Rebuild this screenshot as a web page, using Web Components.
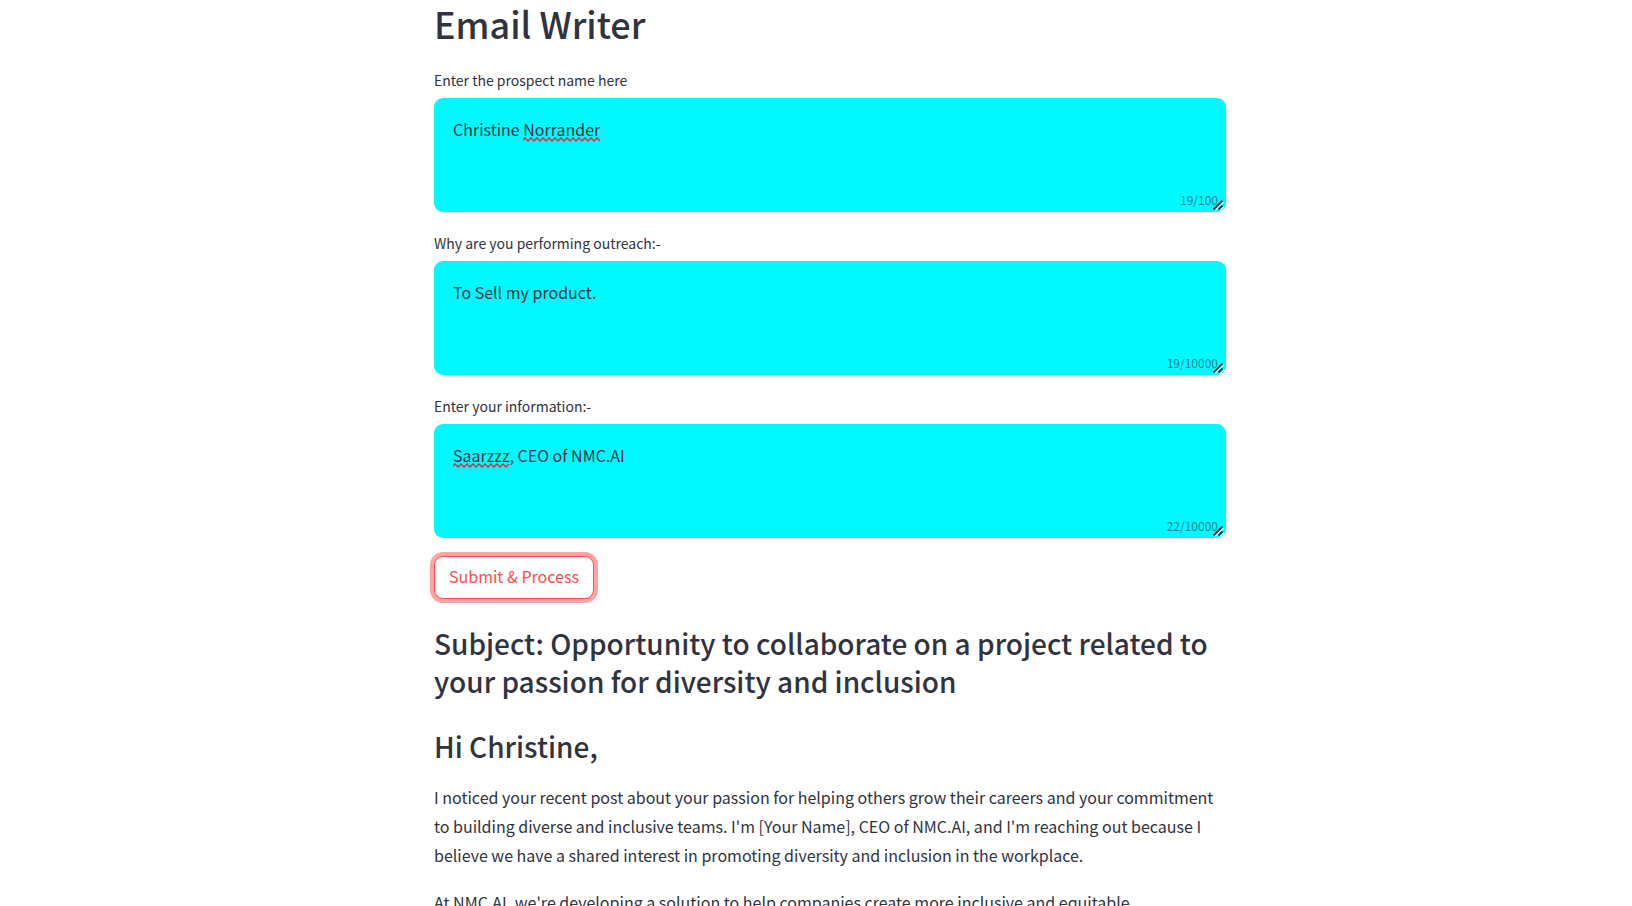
<!DOCTYPE html>
<html lang="en">
<head>
<meta charset="utf-8">
<title>Email Writer</title>
<style>
  html { background: #fff; }
  body { margin: 0; }
</style>
</head>
<body>
<email-app></email-app>
<script>
class TextField extends HTMLElement {
  connectedCallback() {
    const label = this.getAttribute('label');
    const value = this.getAttribute('value');
    const max = this.getAttribute('max');
    this.attachShadow({ mode: 'open' }).innerHTML = `
      <style>
        :host { display: block; }
        label { display: block; font-size: 14px; line-height: 22px; margin-bottom: 7px; }
        .box { position: relative; height: 114px; border-radius: 9px; background: #00f9ff; overflow: hidden; }
        textarea {
          display: block; box-sizing: border-box; width: 100%; height: 100%; margin: 0;
          padding: 17px 19px; border: 0; outline: 0; background: transparent;
          color: inherit; font: inherit; line-height: 28px; resize: none;
        }
        .count { position: absolute; right: 8px; bottom: 3px; font-size: 12px; line-height: 18px; opacity: .6; pointer-events: none; }
        .grip { position: absolute; right: 2px; bottom: 1px; width: 11px; height: 11px; pointer-events: none; }
        .wave { position: absolute; top: 39px; height: 5px; pointer-events: none; overflow: hidden; }
      </style>
      <label for="field"></label>
      <div class="box">
        <textarea id="field" spellcheck="false"></textarea>
        <span class="count"></span>
        <svg class="grip" viewBox="0 0 11 11" fill="none" aria-hidden="true">
          <path d="M2 10.5L10.5 2M7 10.5L10.5 7" stroke="#d8ffff" stroke-width="1.5"/>
          <path d="M.5 9.5L9.5 .5M5.5 9.5L9.5 5.5" stroke="#263245" stroke-width="1.8"/>
        </svg>
      </div>`;
    const root = this.shadowRoot;
    root.querySelector('label').textContent = label;
    root.querySelector('textarea').value = value;
    root.querySelector('.count').textContent = value.length + '/' + max;
    const wrong = this.getAttribute('misspelt');
    if (wrong) this.underline(value, wrong);
  }
  underline(value, word) {
    const area = this.shadowRoot.querySelector('textarea');
    const style = getComputedStyle(area);
    const pen = document.createElement('canvas').getContext('2d');
    pen.font = style.fontSize + ' ' + style.fontFamily;
    const before = pen.measureText(value.slice(0, value.indexOf(word))).width;
    const width = Math.round(pen.measureText(word).width);
    let d = 'M-1 4';
    for (let x = -1, up = true; x < width; x += 3, up = !up) d += 'L' + (x + 3) + ' ' + (up ? 1 : 4);
    const box = this.shadowRoot.querySelector('.box');
    box.insertAdjacentHTML('beforeend',
      `<svg class="wave" aria-hidden="true" width="${width}" height="5" style="left:${Math.round(parseFloat(style.paddingLeft) + before)}px"><path d="${d}" fill="none" stroke="#e32636" stroke-width="1.3"/></svg>`);
  }
}
customElements.define('text-field', TextField);

class SubmitButton extends HTMLElement {
  constructor() {
    super();
    this.attachShadow({ mode: 'open' }).innerHTML = `
      <style>
        :host { display: block; }
        button {
          display: block; height: 43px; margin: 0; padding: 0 14px 3px; border: 1px solid #ff4b4b; border-radius: 9px;
          background: #fff; color: #ff4b4b; font: inherit; line-height: 28px;
          box-shadow: 0 0 0 4px rgba(255, 75, 75, .5); cursor: pointer;
        }
      </style>
      <button type="submit"><slot></slot></button>`;
  }
}
customElements.define('submit-button', SubmitButton);

class EmailMessage extends HTMLElement {
  constructor() {
    super();
    this.attachShadow({ mode: 'open' }).innerHTML = `
      <style>
        :host { display: block; }
        ::slotted(h2) { margin: 0 0 27px; font-size: 28px; font-weight: 500; line-height: 38px; }
        ::slotted(h2:nth-of-type(2)) { margin-bottom: 18px; }
        ::slotted(p) { margin: 0 0 18px; line-height: 29px; }
      </style>
      <slot></slot>`;
  }
}
customElements.define('email-message', EmailMessage);

class EmailApp extends HTMLElement {
  constructor() {
    super();
    this.attachShadow({ mode: 'open' }).innerHTML = `
      <style>
        :host {
          display: block; height: 100vh; overflow: hidden; box-sizing: border-box; padding-left: 28px;
          color: #31333f; font: 16px/28px "Noto Sans CJK SC", "Noto Sans", sans-serif;
        }
        main { max-width: 792px; margin: 0 auto; }
        h1 { margin: 0; font-size: 36px; font-weight: 500; line-height: 46px; padding-bottom: 23px; }
        .fields { display: grid; gap: 20px; margin-bottom: 18px; }
        email-message { margin-top: 25px; }
      </style>
      <main>
        <h1>Email Writer</h1>
        <div class="fields">
          <text-field label="Enter the prospect name here" value="Christine Norrander" max="100" misspelt="Norrander"></text-field>
          <text-field label="Why are you performing outreach:-" value="To Sell my product." max="10000"></text-field>
          <text-field label="Enter your information:-" value="Saarzzz, CEO of NMC.AI" max="10000" misspelt="Saarzzz"></text-field>
        </div>
        <submit-button>Submit &amp; Process</submit-button>
        <email-message>
          <h2>Subject: Opportunity to collaborate on a project related to your passion for diversity and inclusion</h2>
          <h2>Hi Christine,</h2>
          <p>I noticed your recent post about your passion for helping others grow their careers and your commitment to building diverse and inclusive teams. I'm [Your Name], CEO of NMC.AI, and I'm reaching out because I believe we have a shared interest in promoting diversity and inclusion in the workplace.</p>
          <p>At NMC.AI, we're developing a solution to help companies create more inclusive and equitable</p>
        </email-message>
      </main>`;
  }
}
customElements.define('email-app', EmailApp);
</script>
</body>
</html>
